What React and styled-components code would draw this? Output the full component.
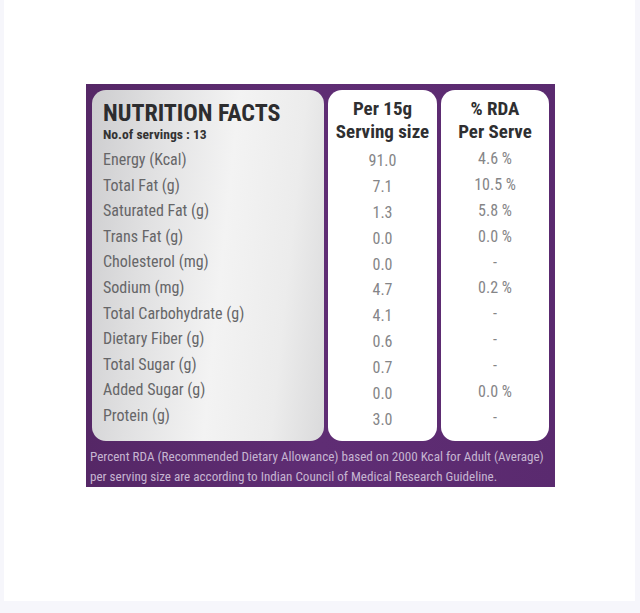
import React from 'react';
import styled, { createGlobalStyle } from 'styled-components';

const Global = createGlobalStyle`
  html, body { margin:0; padding:0; background:#f6f6fb; }
  body { font-family: "Roboto Condensed", Roboto, "Liberation Sans", sans-serif; }
`;

const Page = styled.div`
  width:631px;
  height:601px;
  margin-left:4px;
  background:#fff;
  padding-top:84px;
  padding-left:82px;
  box-sizing:border-box;
`;

const Label = styled.div`
  width:469px;
  background:linear-gradient(90deg, #552766 0%, #5f2d74 50%, #5a2a6f 100%);
  padding:6px 7px 0 6px;
  box-sizing:border-box;
`;

const Columns = styled.div`
  display:grid;
  grid-template-columns:232px 109px 108px;
  column-gap:4px;
  height:351px;
`;

const Panel = styled.div`
  border-radius:14px;
  background:${p => p.$silver
    ? 'linear-gradient(96deg, #cdcdcf 0%, #e0e0e1 25%, #f3f3f3 55%, #ececec 80%, #dadadb 100%)'
    : '#fff'};
  padding-top:${p => p.$top}px;
  box-sizing:border-box;
  display:flex;
  flex-direction:column;
  align-items:${p => p.$center ? 'center' : 'stretch'};
`;

const Title = styled.div`
  font-size:24px;
  font-weight:700;
  line-height:26px;
  color:#2d2d2f;
  font-stretch:condensed;
  padding-left:11px;
`;

const Sub = styled.div`
  font-size:13.6px;
  font-weight:700;
  line-height:16px;
  color:#333;
  font-stretch:condensed;
  padding-left:11px;
  margin-bottom:${p => p.$gap}px;
`;

const Head = styled.div`
  font-size:19px;
  font-weight:700;
  line-height:23px;
  color:#2f2f31;
  font-stretch:condensed;
  text-align:center;
  margin-bottom:${p => p.$gap || 0}px;
`;

const Row = styled.div`
  height:${p => p.$h}px;
  line-height:${p => p.$h}px;
  font-size:16px;
  color:${p => p.$dim ? '#858587' : '#666668'};
  font-stretch:condensed;
  padding-left:${p => p.$left || 0}px;
  text-align:${p => p.$left ? 'left' : 'center'};
  width:100%;
  box-sizing:border-box;
  white-space:nowrap;
`;

const Footer = styled.div`
  padding:6px 0 0 0;
  margin-left:-2px;
  height:46px;
  box-sizing:border-box;
  font-size:13.1px;
  line-height:20px;
  color:#c6b5d1;
  font-stretch:condensed;
  white-space:nowrap;
`;

const rows = [
  ['Energy (Kcal)', '91.0', '4.6 %'],
  ['Total Fat (g)', '7.1', '10.5 %'],
  ['Saturated Fat (g)', '1.3', '5.8 %'],
  ['Trans Fat (g)', '0.0', '0.0 %'],
  ['Cholesterol (mg)', '0.0', '-'],
  ['Sodium (mg)', '4.7', '0.2 %'],
  ['Total Carbohydrate (g)', '4.1', '-'],
  ['Dietary Fiber (g)', '0.6', '-'],
  ['Total Sugar (g)', '0.7', '-'],
  ['Added Sugar (g)', '0.0', '0.0 %'],
  ['Protein (g)', '3.0', '-'],
];

export default function App() {
  return (
    <>
      <Global />
      <Page>
        <Label>
          <Columns>
            <Panel $silver $top={10}>
              <Title>NUTRITION FACTS</Title>
              <Sub $gap={5}>No.of servings : 13</Sub>
              {rows.map(r => (
                <Row key={r[0]} $h={25.6} $left={11}>{r[0]}</Row>
              ))}
            </Panel>
            <Panel $center $top={7}>
              <Head>Per 15g</Head>
              <Head $gap={5}>Serving size</Head>
              {rows.map(r => (
                <Row key={r[0]} $h={25.9} $dim>{r[1]}</Row>
              ))}
            </Panel>
            <Panel $center $top={7}>
              <Head>% RDA</Head>
              <Head $gap={3}>Per Serve</Head>
              {rows.map(r => (
                <Row key={r[0]} $h={25.9} $dim>{r[2]}</Row>
              ))}
            </Panel>
          </Columns>
          <Footer>
            Percent RDA (Recommended Dietary Allowance) based on 2000 Kcal for Adult (Average)<br />
            per serving size are according to Indian Council of Medical Research Guideline.
          </Footer>
        </Label>
      </Page>
    </>
  );
}
